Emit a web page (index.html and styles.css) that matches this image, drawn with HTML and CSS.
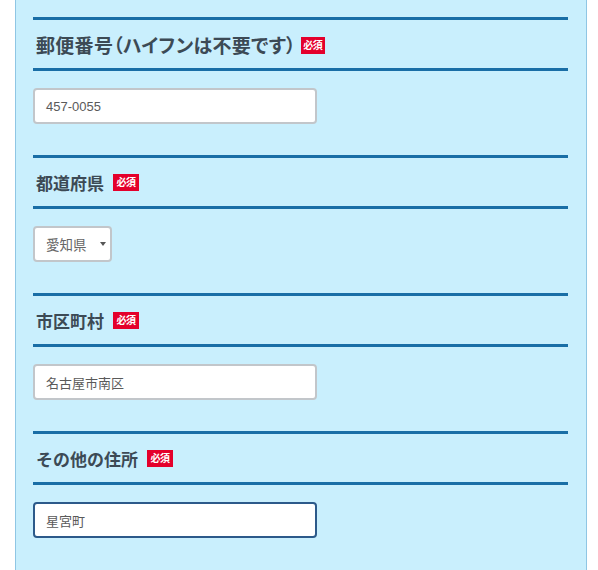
FILE: index.html
```html
<!DOCTYPE html>
<html lang="ja">
<head>
<meta charset="utf-8">
<link rel="stylesheet" href="styles.css">
</head>
<body>
<div class="panel">
  <section class="field">
    <h3 class="label label-zip"><span>郵便番号（ハイフンは不要です）</span><span class="req req-zip">必須</span></h3>
    <div class="input">457-0055</div>
  </section>
  <section class="field">
    <h3 class="label"><span>都道府県</span><span class="req">必須</span></h3>
    <div class="select"><span>愛知県</span><span class="arrow"></span></div>
  </section>
  <section class="field">
    <h3 class="label"><span>市区町村</span><span class="req">必須</span></h3>
    <div class="input">名古屋市南区</div>
  </section>
  <section class="field">
    <h3 class="label"><span>その他の住所</span><span class="req">必須</span></h3>
    <div class="input focused">星宮町</div>
  </section>
</div>
</body>
</html>
```

FILE: styles.css
```css
html, body {
  margin: 0;
  padding: 0;
  background: #ffffff;
}
body {
  font-family: "Noto Sans CJK JP", "Noto Sans", sans-serif;
  height: 570px;
  overflow: hidden;
}
.panel {
  margin-left: 15px;
  width: 572px;
  height: 570px;
  background: #c9effd;
  border-left: 1px solid #8fc6e4;
  border-right: 1px solid #8fc6e4;
  padding: 17px 18px 0 17px;
  box-sizing: border-box;
}
.field {
  margin-bottom: 31px;
}
.label {
  margin: 0;
  height: 48px;
  border-top: 3px solid #196ea6;
  border-bottom: 3px solid #196ea6;
  display: flex;
  align-items: center;
  padding-left: 3px;
  font-size: 17px;
  font-weight: 700;
  color: #3c4a55;
  line-height: 1;
}
.label-zip {
  font-size: 19px;
  font-feature-settings: "palt";
  letter-spacing: 0.3px;
}
.req {
  display: inline-flex;
  align-items: center;
  justify-content: center;
  margin-left: 9px;
  width: 26px;
  height: 17px;
  background: #e4002b;
  color: #ffffff;
  font-size: 10px;
  font-weight: 700;
  letter-spacing: -0.5px;
  font-feature-settings: normal;
}
.req.req-zip {
  margin-left: 5px;
  width: 24px;
  height: 17px;
  margin-top: 2px;
}
.input {
  margin-top: 17px;
  width: 284px;
  height: 36px;
  box-sizing: border-box;
  background: #ffffff;
  border: 2px solid #c2c6ca;
  border-radius: 4px;
  padding-left: 11px;
  display: flex;
  align-items: center;
  font-family: "Liberation Sans", "Noto Sans CJK JP", sans-serif;
  font-size: 13px;
  color: #5a5a5a;
}
.input.focused {
  border-color: #2c5a8a;
}
.select {
  margin-top: 17px;
  width: 79px;
  height: 36px;
  box-sizing: border-box;
  background: #ffffff;
  border: 2px solid #c2c6ca;
  border-radius: 4px;
  padding-left: 11px;
  padding-right: 4px;
  display: flex;
  align-items: center;
  justify-content: space-between;
  font-size: 13.5px;
  color: #666666;
}
.arrow {
  width: 0;
  height: 0;
  border-left: 3px solid transparent;
  border-right: 3px solid transparent;
  border-top: 4px solid #555555;
}
```
